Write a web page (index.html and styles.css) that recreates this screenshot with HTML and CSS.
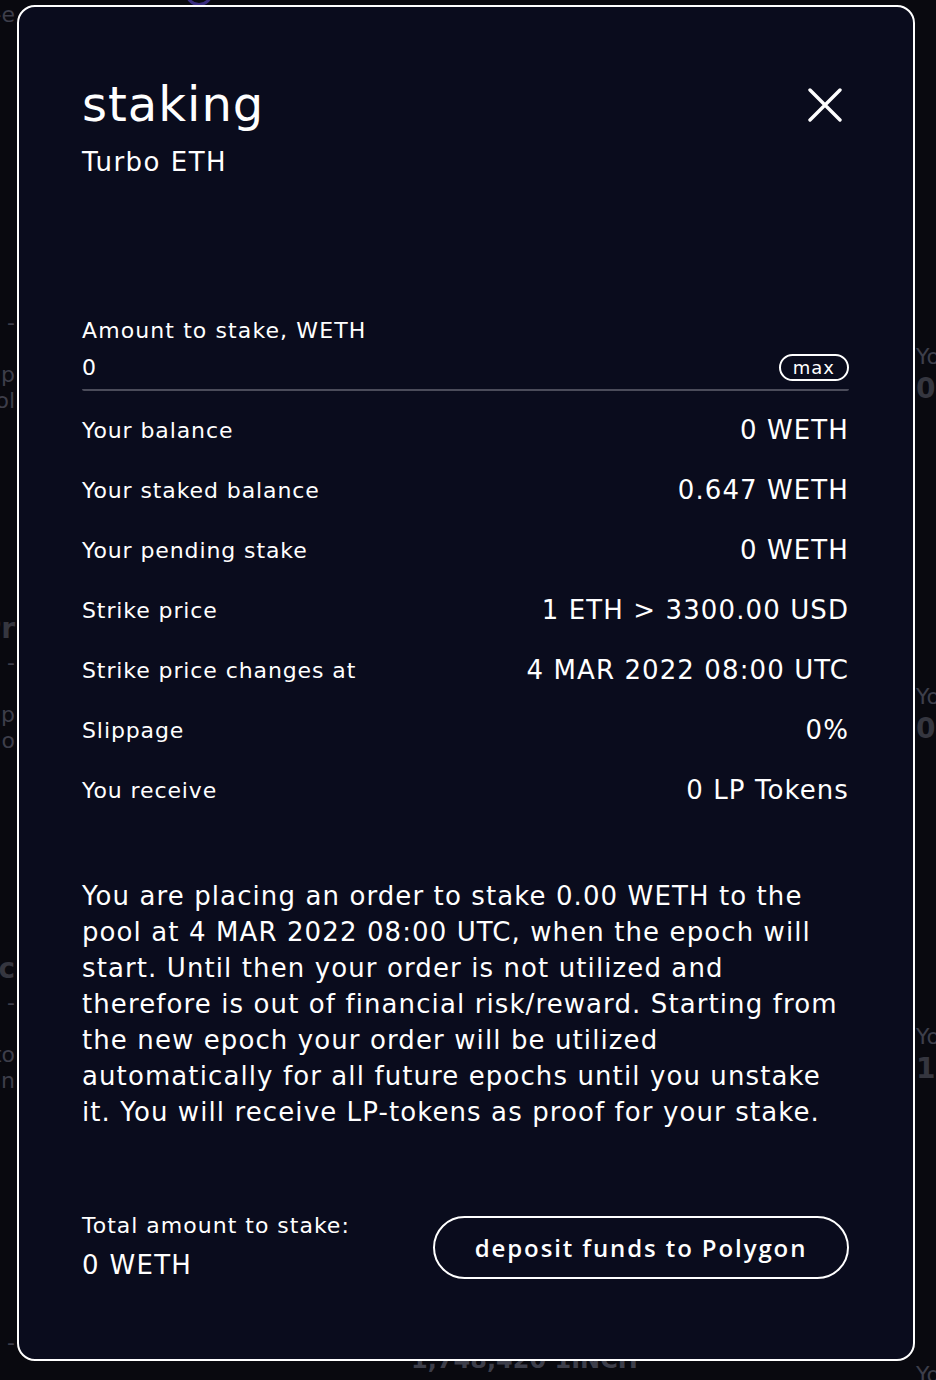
FILE: index.html
```html
<!DOCTYPE html>
<html>
<head>
<meta charset="utf-8">
<link rel="stylesheet" href="styles.css">
</head>
<body>
<div class="page">
  <div class="side left">
    <div class="ghost g1">o -e</div>
    <div class="ghost g2">-</div>
    <div class="ghost g3">he p</div>
    <div class="ghost g4">pool</div>
    <div class="ghost g5 big">Pr</div>
    <div class="ghost g6">-</div>
    <div class="ghost g7">p</div>
    <div class="ghost g8">o</div>
    <div class="ghost g9 big">tic</div>
    <div class="ghost g10">o -</div>
    <div class="ghost g11">to</div>
    <div class="ghost g12">n</div>
    <div class="ghost g13">-</div>
  </div>
  <div class="mid">
    <div class="ring"></div>
    <div class="ghost bottom">1,748,420 1INCH</div>
  </div>
  <div class="side right">
    <div class="ghost r1">You</div>
    <div class="ghost r2 big">0.6</div>
    <div class="ghost r3">You</div>
    <div class="ghost r4 big">0 U</div>
    <div class="ghost r5">You</div>
    <div class="ghost r6 big">1 C</div>
    <div class="ghost r7">You</div>
  </div>
</div>

<div class="modal">
  <div class="head">
    <div class="titles">
      <h1 class="title">staking</h1>
      <div class="subtitle">Turbo ETH</div>
    </div>
    <svg class="close" width="34" height="34" viewBox="0 0 34 34"><path d="M2 2 L32 32 M32 2 L2 32" stroke="#fff" stroke-width="3.4" stroke-linecap="round"/></svg>
  </div>

  <div class="field">
    <div class="field-label">Amount to stake, WETH</div>
    <div class="field-input">
      <span class="field-value">0</span>
      <span class="max">max</span>
    </div>
  </div>

  <div class="rows">
    <div class="row"><span class="k">Your balance</span><span class="v">0 WETH</span></div>
    <div class="row"><span class="k">Your staked balance</span><span class="v">0.647 WETH</span></div>
    <div class="row"><span class="k">Your pending stake</span><span class="v">0 WETH</span></div>
    <div class="row"><span class="k">Strike price</span><span class="v">1 ETH &gt; 3300.00 USD</span></div>
    <div class="row"><span class="k">Strike price changes at</span><span class="v">4 MAR 2022 08:00 UTC</span></div>
    <div class="row"><span class="k">Slippage</span><span class="v">0%</span></div>
    <div class="row"><span class="k">You receive</span><span class="v">0 LP Tokens</span></div>
  </div>

  <p class="note">You are placing an order to stake 0.00 WETH to the pool at 4 MAR 2022 08:00 UTC, when the epoch will start. Until then your order is not utilized and therefore is out of financial risk/reward. Starting from the new epoch your order will be utilized automatically for all future epochs until you unstake it. You will receive LP-tokens as proof for your stake.</p>

  <div class="foot">
    <div class="total">
      <div class="total-label">Total amount to stake:</div>
      <div class="total-value">0 WETH</div>
    </div>
    <button class="btn">deposit funds to Polygon</button>
  </div>
</div>
</body>
</html>
```

FILE: styles.css
```css
html, body {
  margin: 0;
  padding: 0;
  background: #09090f;
  font-family: "DejaVu Sans", "Open Sans", sans-serif;
  color: #fff;
}
body {
  width: 936px;
  height: 1380px;
  overflow: hidden;
  position: relative;
}
.page {
  display: grid;
  grid-template-columns: 17px 1fr 22px;
  height: 1380px;
}
.side {
  position: relative;
  overflow: hidden;
}
.ghost {
  color: #3d3e4a;
  font-size: 22px;
  white-space: nowrap;
  position: absolute;
}
.ghost.big { font-size: 28px; font-weight: 700; color: #35363f; }
.left .ghost { right: 2px; }
.right .ghost { left: 2px; }
.g1 { top: 2px; }
.g2 { top: 310px; }
.g3 { top: 362px; }
.g4 { top: 388px; }
.g5 { top: 612px; }
.g6 { top: 650px; }
.g7 { top: 702px; }
.g8 { top: 728px; }
.g9 { top: 952px; }
.g10 { top: 990px; }
.g11 { top: 1042px; }
.g12 { top: 1068px; }
.g13 { top: 1330px; }
.r1 { top: 344px; }
.r2 { top: 372px; }
.r3 { top: 684px; }
.r4 { top: 712px; }
.r5 { top: 1024px; }
.r6 { top: 1052px; }
.r7 { top: 1362px; }
.mid { position: relative; }
.ring {
  position: absolute;
  left: 168px;
  top: -22px;
  width: 22px;
  height: 22px;
  border: 3px solid #3a2d80;
  border-radius: 50%;
}
.mid .bottom {
  top: 1346px;
  left: 394px;
  font-size: 24px;
  font-weight: 700;
}

.modal {
  position: absolute;
  left: 17px;
  top: 5px;
  width: 898px;
  height: 1356px;
  box-sizing: border-box;
  border: 2px solid #fff;
  border-radius: 18px;
  background: #0a0c1d;
  padding: 64px 64px 0 63px;
  display: flex;
  flex-direction: column;
}
.head {
  display: flex;
  justify-content: space-between;
  align-items: flex-start;
}
.title {
  margin: 0;
  font-size: 48px;
  font-weight: 400;
  line-height: 66px;
  letter-spacing: 1px;
}
.subtitle {
  font-size: 26px;
  line-height: 34px;
  margin-top: 8px;
  letter-spacing: 1.5px;
}
.close {
  margin-top: 17px;
  margin-right: 7px;
}
.field {
  margin-top: 137px;
}
.field-label {
  font-size: 22px;
  line-height: 30px;
  letter-spacing: 1.1px;
}
.field-input {
  display: flex;
  justify-content: space-between;
  align-items: center;
  height: 43px;
  border-bottom: 2px solid #4b4c5a;
  border-radius: 0 0 2px 2px;
}
.field-value {
  font-size: 22px;
}
.max {
  border: 2px solid #fff;
  border-radius: 14px;
  font-size: 18px;
  line-height: 23px;
  padding: 0 12px;
  letter-spacing: 1px;
}
.rows {
  margin-top: 9px;
  display: flex;
  flex-direction: column;
}
.row {
  display: flex;
  justify-content: space-between;
  align-items: center;
  height: 60px;
}
.k {
  font-size: 22px;
  letter-spacing: 0.9px;
}
.v {
  font-size: 26px;
  letter-spacing: 1.1px;
}
.note {
  margin: 58px 0 0;
  font-size: 26px;
  line-height: 36px;
  letter-spacing: 1.1px;
}
.foot {
  margin-top: 81px;
  display: flex;
  justify-content: space-between;
  align-items: center;
}
.total-label {
  font-size: 22px;
  line-height: 30px;
  letter-spacing: 1px;
}
.total-value {
  font-size: 26px;
  line-height: 36px;
  margin-top: 6px;
  letter-spacing: 1.3px;
}
.btn {
  width: 416px;
  height: 63px;
  background: transparent;
  border: 2px solid #fff;
  border-radius: 32px;
  color: #fff;
  font-family: "Open Sans", "DejaVu Sans", sans-serif;
  font-size: 24px;
  font-weight: 600;
  letter-spacing: 1.9px;
}
```
